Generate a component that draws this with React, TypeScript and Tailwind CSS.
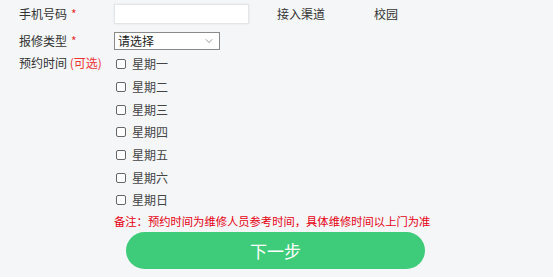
import { ChevronDown } from "lucide-react";

const days = ["星期一", "星期二", "星期三", "星期四", "星期五", "星期六", "星期日"];

export default function App() {
  return (
    <div
      className="w-[553px] h-[277px] bg-[#f4f6f8] text-[#333] text-[12px] pl-[19px] overflow-hidden"
      style={{ fontFamily: '"Noto Sans CJK SC", "Noto Sans", sans-serif' }}
    >
      {/* 手机号码 */}
      <div className="flex items-center h-[28px]">
        <div className="w-[95px] flex items-center">
          手机号码<span className="text-[#e33] ml-[4px]">*</span>
        </div>
        <div className="w-[135px] h-[20px] bg-white border border-[#e3e5e8] shadow-[0_0_2px_rgba(0,0,0,0.08)]" />
        <span className="ml-[28px]">接入渠道</span>
        <span className="ml-[49px]">校园</span>
      </div>

      {/* 报修类型 */}
      <div className="flex items-center h-[25px]">
        <div className="w-[95px] flex items-center">
          报修类型<span className="text-[#e33] ml-[4px]">*</span>
        </div>
        <div className="w-[106px] h-[18px] bg-white border border-[#8a8a8a] flex items-center justify-between pl-[3px] pr-[4px] text-[12px] text-[#222]">
          <span>请选择</span>
          <ChevronDown className="w-3 h-3 text-[#777]" strokeWidth={1.5} />
        </div>
      </div>

      {/* 预约时间 */}
      <div className="flex">
        <div className="w-[97px] pt-[1px] leading-[18px]">
          预约时间 <span className="text-[#e33]">(可选)</span>
        </div>
        <div className="flex flex-col">
          {days.map((d) => (
            <div key={d} className="flex items-center h-[22.7px]">
              <span className="w-[10px] h-[10px] border border-[#666] rounded-[2px] bg-white" />
              <span className="ml-[6px] text-[12px] text-[#444]">{d}</span>
            </div>
          ))}
          <div className="h-[19px] flex items-center -ml-[2px] text-[11.3px] text-[#e60012] whitespace-nowrap">
            备注：预约时间为维修人员参考时间，具体维修时间以上门为准
          </div>
        </div>
      </div>

      <div className="pl-[107px] pt-[1px]">
        <button className="w-[299px] h-[37px] rounded-full bg-[#3fcc7a] text-white text-[17px]">
          下一步
        </button>
      </div>
    </div>
  );
}
